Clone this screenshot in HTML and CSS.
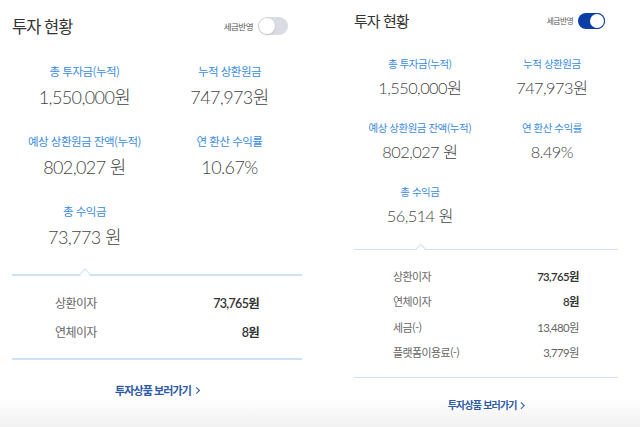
FILE: index.html
```html
<!DOCTYPE html>
<html lang="ko">
<head>
    <meta charset="UTF-8">
    <meta name="viewport" content="width=device-width, initial-scale=1.0">
    <title>투자 현황</title>
    <link rel="stylesheet" href="styles.css">
</head>
<body>
    <div class="page">
        <div class="panels">
            <section class="panel">
                <div class="panel-head">
                    <h2 class="panel-title">투자 현황</h2>
                    <label class="tax-toggle">
                        <span>세금반영</span>
                        <span class="switch"></span>
                    </label>
                </div>

                <div class="summary">
                    <div class="summary-item">
                        <p class="summary-label">총 투자금(누적)</p>
                        <p class="summary-value">1,550,000원</p>
                    </div>
                    <div class="summary-item">
                        <p class="summary-label">누적 상환원금</p>
                        <p class="summary-value">747,973원</p>
                    </div>
                    <div class="summary-item">
                        <p class="summary-label">예상 상환원금 잔액(누적)</p>
                        <p class="summary-value">802,027 원</p>
                    </div>
                    <div class="summary-item">
                        <p class="summary-label">연 환산 수익률</p>
                        <p class="summary-value">10.67%</p>
                    </div>
                    <div class="summary-item">
                        <p class="summary-label">총 수익금</p>
                        <p class="summary-value">73,773 원</p>
                    </div>
                </div>

                <ul class="detail">
                    <li class="detail-row"><span>상환이자</span><strong>73,765원</strong></li>
                    <li class="detail-row"><span>연체이자</span><strong>8원</strong></li>
                </ul>

                <a href="#" class="more-link">투자상품 보러가기<i class="chevron"></i></a>
            </section>

            <section class="panel panel-small">
                <div class="panel-head">
                    <h2 class="panel-title">투자 현황</h2>
                    <label class="tax-toggle">
                        <span>세금반영</span>
                        <span class="switch on"></span>
                    </label>
                </div>

                <div class="summary">
                    <div class="summary-item">
                        <p class="summary-label">총 투자금(누적)</p>
                        <p class="summary-value">1,550,000원</p>
                    </div>
                    <div class="summary-item">
                        <p class="summary-label">누적 상환원금</p>
                        <p class="summary-value">747,973원</p>
                    </div>
                    <div class="summary-item">
                        <p class="summary-label">예상 상환원금 잔액(누적)</p>
                        <p class="summary-value">802,027 원</p>
                    </div>
                    <div class="summary-item">
                        <p class="summary-label">연 환산 수익률</p>
                        <p class="summary-value">8.49%</p>
                    </div>
                    <div class="summary-item">
                        <p class="summary-label">총 수익금</p>
                        <p class="summary-value">56,514 원</p>
                    </div>
                </div>

                <ul class="detail">
                    <li class="detail-row"><span>상환이자</span><strong>73,765원</strong></li>
                    <li class="detail-row"><span>연체이자</span><strong>8원</strong></li>
                    <li class="detail-row minus"><span>세금(-)</span><strong>13,480원</strong></li>
                    <li class="detail-row minus"><span>플랫폼이용료(-)</span><strong>3,779원</strong></li>
                </ul>

                <a href="#" class="more-link">투자상품 보러가기<i class="chevron"></i></a>
            </section>
        </div>
    </div>
</body>
</html>
```

FILE: styles.css
```css
* {
    margin: 0;
    padding: 0;
    box-sizing: border-box;
}

body {
    font-family: Lato, "Noto Sans CJK KR", sans-serif;
    color: #333;
    background: #fff;
}

.page {
    height: 427px;
    overflow: hidden;
    background: linear-gradient(to bottom, #fff 0, #fff 398px, #f1f1f1 427px);
}

.panels {
    display: flex;
    gap: 29px;
}

.panel {
    width: 314px;
    padding: 14px 12px 0;
}

.panel-small {
    zoom: 0.91;
    padding-top: 11px;
}

.panel-small .summary {
    margin-top: 28px;
}

.panel-small .detail {
    padding-top: 14px;
    padding-bottom: 13px;
}

.panel-small .detail-row {
    height: 28px;
}

.panel-head {
    height: 24px;
    display: flex;
    justify-content: space-between;
    align-items: center;
}

.panel-title {
    font-family: "Noto Sans CJK KR", sans-serif;
    font-size: 16.5px;
    font-weight: 400;
    letter-spacing: -1px;
    color: #333;
}

.tax-toggle {
    display: flex;
    align-items: center;
    gap: 5px;
    margin-right: 14px;
    font-family: "Noto Sans CJK KR", sans-serif;
    font-size: 8.5px;
    letter-spacing: -0.5px;
    color: #555;
}

.switch {
    position: relative;
    width: 30px;
    height: 18px;
    border-radius: 9px;
    background: #d9dce2;
}

.switch::after {
    content: "";
    position: absolute;
    left: 1px;
    top: 1px;
    width: 16px;
    height: 16px;
    border-radius: 50%;
    background: #fff;
    box-shadow: 0 0 0 0.5px #c9ccd2, 0 1px 2px rgba(0,0,0,0.15);
}

.switch.on {
    background: #0b3ea6;
}

.switch.on::after {
    left: 13px;
    box-shadow: 0 0 0 1px #0b3ea6;
}

.summary {
    display: grid;
    grid-template-columns: 1fr 1fr;
    row-gap: 23px;
    margin-top: 25px;
    text-align: center;
}

.summary-label {
    font-family: "Noto Sans CJK KR", sans-serif;
    font-size: 11.5px;
    line-height: 16px;
    letter-spacing: -0.5px;
    color: #3b8be2;
}

.summary-value {
    margin-top: 5px;
    font-size: 18px;
    font-weight: 300;
    line-height: 26px;
    letter-spacing: -0.6px;
    color: #444;
}

.detail {
    position: relative;
    list-style: none;
    margin-top: 24px;
    padding: 12px 43px;
    border-top: 2px solid #cfe1f7;
    border-bottom: 2px solid #cfe1f7;
}

/* 총 수익금 쪽을 가리키는 꺾쇠 */
.detail::before {
    content: "";
    position: absolute;
    left: 69px;
    top: -6px;
    width: 7px;
    height: 7px;
    background: #fff;
    border-top: 1.5px solid #cfe1f7;
    border-left: 1.5px solid #cfe1f7;
    transform: rotate(45deg);
}

.detail-row {
    display: flex;
    justify-content: space-between;
    align-items: center;
    height: 29px;
}

.detail-row span {
    font-family: "Noto Sans CJK KR", sans-serif;
    font-size: 12px;
    letter-spacing: -0.6px;
    color: #666;
}

.detail-row strong {
    font-size: 12.5px;
    font-weight: 600;
    letter-spacing: -0.7px;
    color: #333;
}

.detail-row.minus strong {
    font-weight: 400;
    color: #666;
}

.more-link {
    display: flex;
    justify-content: center;
    align-items: center;
    margin-top: 20px;
    line-height: 20px;
    font-family: "Noto Sans CJK KR", sans-serif;
    font-size: 11px;
    font-weight: 700;
    letter-spacing: -0.9px;
    color: #2d5aa6;
    text-decoration: none;
}

.chevron {
    width: 5px;
    height: 5px;
    margin-left: 3px;
    border-top: 1.5px solid #2d5aa6;
    border-right: 1.5px solid #2d5aa6;
    transform: rotate(45deg);
}
```
